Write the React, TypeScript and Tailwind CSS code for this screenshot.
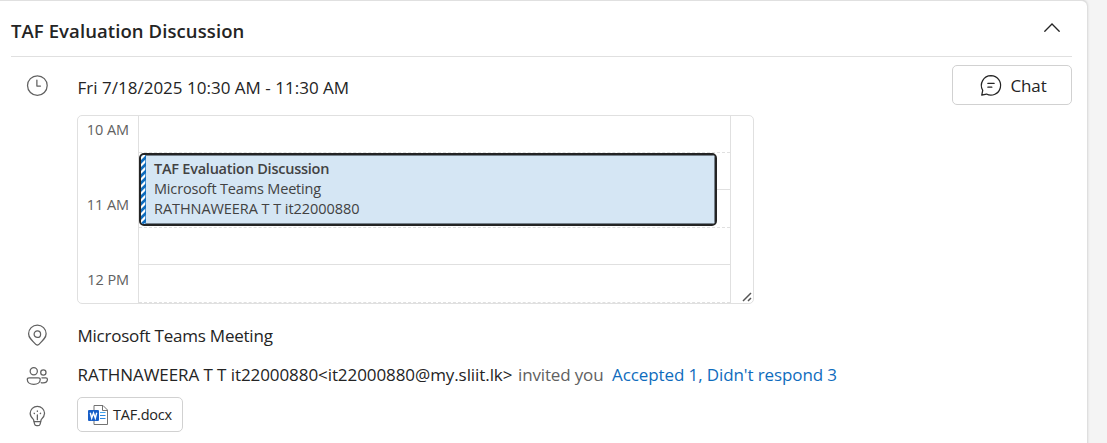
import React from "react";

const iconProps = {
  viewBox: "-0.3 -0.3 20 20",
  fill: "none",
  stroke: "currentColor",
  strokeLinecap: "round" as const,
  strokeLinejoin: "round" as const,
};

function ClockIcon() {
  return (
    <svg {...iconProps} viewBox="-0.3 -0.5 20 20" strokeWidth="1.05" className="h-[24px] w-[24px]">
      <circle cx="10" cy="10" r="8.2" />
      <path d="M9.6 5.4v5h3" />
    </svg>
  );
}

function PinIcon() {
  return (
    <svg {...iconProps} strokeWidth="1.05" className="h-[24px] w-[24px]">
      <path d="M10 18.1c-.4 0-.8-.2-1.1-.4C5.2 14.2 2.7 11.9 2.7 8.7a7.3 7.3 0 0 1 14.6 0c0 3.2-2.5 5.5-6.2 9-.3.2-.7.4-1.1.4Z" />
      <circle cx="10" cy="9" r="2.7" />
    </svg>
  );
}

function PeopleIcon() {
  return (
    <svg {...iconProps} viewBox="-0.3 0 20 20" strokeWidth="1.05" className="h-[24px] w-[24px]">
      <circle cx="7" cy="6" r="3" />
      <circle cx="15" cy="7" r="2.2" />
      <path d="M3.2 11.5h7.6c.9 0 1.6.7 1.6 1.5 0 2.4-2.3 4-5.4 4s-5.4-1.6-5.4-4c0-.8.7-1.5 1.6-1.5Z" />
      <path d="M13.8 11.5h3.2c.8 0 1.4.6 1.4 1.3 0 1.9-1.7 3-3.7 3-.6 0-1-.1-1.500-.2" />
    </svg>
  );
}

function BulbIcon() {
  return (
    <svg {...iconProps} strokeWidth="1.05" className="h-[24px] w-[24px]">
      <path d="M10 1.6a6 6 0 0 1 6 5.9c0 2-1 3.6-2.8 5.2l-.9 3.7a1.8 1.8 0 0 1-1.7 1.4H9.4a1.8 1.8 0 0 1-1.7-1.4l-.9-3.7C5 11.1 4 9.5 4 7.5a6 6 0 0 1 6-5.9Z" />
      <path d="M7.300 14.300h5.400M10 8.800v4M10 5.500v.4M7.300 7.400l.3.300M12.700 7.400l-.3.300" />
    </svg>
  );
}

function ChatIcon() {
  return (
    <svg {...iconProps} viewBox="0 0.500 20 20" strokeWidth="1.05" className="h-[24px] w-[24px]">
      <path d="M10 1.9a8.1 8.1 0 1 1-3.8 15.3L2.3 18.1l.8-4A8.1 8.1 0 0 1 10 1.9Z" />
      <path d="M7.400 8.400h5.200M7.400 11.500h3.300" />
    </svg>
  );
}

function WordIcon() {
  return (
    <svg viewBox="0 0 20 20" fill="none" className="h-[20px] w-[20px]">
      <path d="M6 .5h9L19.500 5v14.500H6Z" fill="#fff" stroke="#737373" />
      <path d="M14.500.8v4.700h4.700" stroke="#737373" />
      <path d="M12 7.500h5.500" stroke="#41a5ee" />
      <path d="M12 10.500h5.500M12 13.500h5.500" stroke="#2b88e0" />
      <rect y="5" width="11" height="11" rx="1" fill="#185fc8" />
      <path d="m2.300 7.700 1.400 5.400 1.800-5 1.800 5 1.400-5.400" stroke="#fff" strokeWidth="1.400" />
    </svg>
  );
}

function Calendar() {
  return (
    <div className="relative flex h-[189px] w-[677px] overflow-hidden rounded-[5px] border border-[#e0e0e0]">
      <div className="flex w-[61px] shrink-0 flex-col border-r border-[#e0e0e0] pr-[9px] pt-[3px] text-right text-[14.5px] leading-[22px] text-[#616161]">
        <div className="h-[75px] tracking-[-0.08px]">10 AM</div>
        <div className="h-[75px] tracking-[-0.08px]">11 AM</div>
        <div className="tracking-[-0.08px]">12 PM</div>
      </div>
      <div className="w-[592px] shrink-0 border-r border-[#e0e0e0]">
        <div className="h-[37px] border-b border-dashed border-[#e0e0e0]" />
        <div className="h-[37px] border-b border-[#e0e0e0]" />
        <div className="h-[38px] border-b border-dashed border-[#e0e0e0]" />
        <div className="h-[37px] border-b border-[#e0e0e0]" />
        <div className="h-[38px] border-b border-dashed border-[#e0e0e0]" />
      </div>
      <div className="absolute left-[61px] top-[37px] flex h-[73px] w-[578px] overflow-hidden rounded-[5px] border-2 border-[#242424] bg-[#d5e6f4]">
        <svg viewBox="0 0 5 69" className="h-[69px] w-[5px] shrink-0">
          <defs>
            <pattern id="stripes" width="7" height="7" patternUnits="userSpaceOnUse">
              <rect width="7" height="7" fill="#fff" />
              <path d="M-2 9 9-2M-2 2 2-2M5 9 9 5" stroke="#0f6cbd" strokeWidth="2.7" />
            </pattern>
          </defs>
          <rect width="5" height="69" fill="url(#stripes)" />
          <path d="M4.600 0v69" stroke="#0f6cbd" strokeWidth=".8" />
        </svg>
        <div className="flex-1 whitespace-nowrap border border-l-0 border-[#75818b] pl-[8px] pt-[3px] text-[14.5px] leading-[20px] text-[#424242]">
          <div><span className="font-semibold tracking-[-0.24px]">TAF Evaluation Discussion</span></div>
          <div><span className="tracking-[-0.17px]">Microsoft Teams Meeting</span></div>
          <div><span className="tracking-[-0.06px]">RATHNAWEERA T T it22000880</span></div>
        </div>
      </div>
      <svg viewBox="0 0 10 10" className="absolute bottom-[1px] right-[1px] h-[10px] w-[10px]" stroke="#555" strokeWidth="1.5">
        <path d="m1 9 8-8M6 9l3-3" />
      </svg>
    </div>
  );
}

export default function App() {
  return (
    <div className="h-[443px] w-[1107px] overflow-hidden bg-[#f4f4f4] font-['Open_Sans','Noto_Sans',sans-serif] text-[17px] text-[#242424]">
      <main className="mr-[20px] h-[460px] rounded-tr-[6px] border-t border-[#e0e0e0] bg-white pl-[11px] pr-[15px] shadow-[0_0_3px_rgba(0,0,0,0.25)]">
        <header className="flex h-[56px] items-center justify-between border-b border-[#e0e0e0] pr-[12px]">
          <h1 className="whitespace-nowrap pt-[5px] text-[18.5px] font-semibold leading-[26px]"><span className="tracking-[0.09px]">TAF Evaluation Discussion</span></h1>
          <svg viewBox="0 0 16 9" className="mb-[2px] h-[9px] w-[16px]" fill="none" stroke="#242424" strokeWidth="1.3" strokeLinecap="round">
            <path d="m.8 8.200 7.200-7.200 7.200 7.200" />
          </svg>
        </header>
        <section className="flex h-[58px] items-start">
          <div className="w-[66.5px] pl-[14px] pt-[16px] text-[#616161]"><ClockIcon /></div>
          <div className="flex-1 whitespace-nowrap pt-[18px] leading-[26px]"><span className="tracking-[0.01px]">Fri 7/18/2025 10:30 AM - 11:30 AM</span></div>
          <button className="mt-[8px] flex h-[40px] w-[120px] items-center justify-center gap-[7px] rounded-[5px] border border-[#d1d1d1] bg-white pl-[2px] pt-px">
            <ChatIcon />
            <span className="tracking-[-0.1px]">Chat</span>
          </button>
        </section>
        <div className="pl-[66px]"><Calendar /></div>
        <section className="flex h-[51px] items-start pt-[19px]">
          <div className="w-[66.5px] pl-[14px] text-[#616161]"><PinIcon /></div>
          <div className="whitespace-nowrap leading-[26px]"><span className="tracking-[-0.23px]">Microsoft Teams Meeting</span></div>
        </section>
        <section className="flex h-[42px] items-start pt-[7px]">
          <div className="w-[66.5px] pl-[14px] pt-[2px] text-[#616161]"><PeopleIcon /></div>
          <div className="flex whitespace-nowrap leading-[26px]">
            <span className="w-[440.5px] tracking-[-0.08px]">RATHNAWEERA T T it22000880&lt;it22000880@my.sliit.lk&gt;</span>
            <span className="w-[94px] tracking-[-0.15px] text-[#616161]">invited you</span>
            <span className="tracking-[-0.1px] text-[#0f6cbd]">Accepted 1, Didn't respond 3</span>
          </div>
        </section>
        <section className="flex items-start">
          <div className="w-[66px] pl-[14px] pt-[7px] text-[#616161]"><BulbIcon /></div>
          <div className="flex h-[35px] w-[106px] items-center gap-[5px] whitespace-nowrap rounded-[5px] border border-[#d1d1d1] pl-[10px] text-[14.5px]">
            <WordIcon />
            <span className="tracking-[-0.2px]">TAF.docx</span>
          </div>
        </section>
      </main>
    </div>
  );
}
